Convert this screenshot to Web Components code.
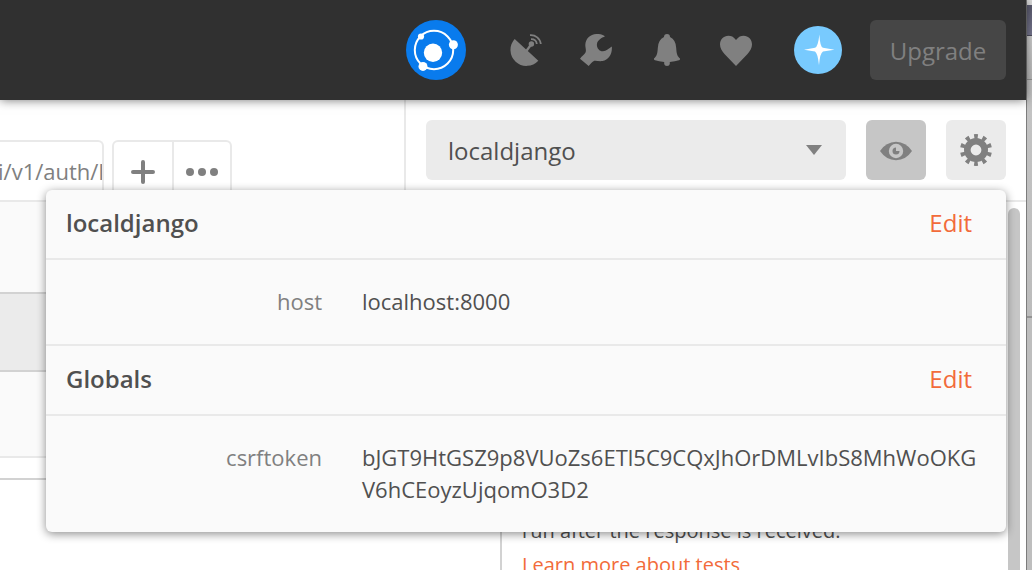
<!DOCTYPE html>
<html lang="en">
<head>
<meta charset="utf-8">
<title>API client</title>
<style>
  html, body { height: 100%; margin: 0; }
  body {
    font-family: "Open Sans", "Noto Sans", sans-serif;
    font-size: 22px; line-height: 32px; color: #505050; background: #fff;
    overflow: hidden;
    --line: #e9e9e9; --line-strong: #d2d2d2; --muted: #808080; --accent: #f26b3a; --panel: #fafafa;
  }
</style>
</head>
<body>
<app-shell>
  <app-header slot="header"></app-header>
  <request-tabs slot="tabs" label="i/v1/auth/l"></request-tabs>
  <env-bar slot="env"></env-bar>
  <request-builder slot="main"></request-builder>
  <env-popover slot="popover">
    <env-section heading="localdjango" name="host">localhost:8000</env-section>
    <env-section heading="Globals" name="csrftoken">bJGT9HtGSZ9p8VUoZs6ETl5C9CQxJhOrDMLvIbS8MhWoOKGV6hCEoyzUjqomO3D2</env-section>
  </env-popover>
</app-shell>

<script>
const define = (tag, html, setup) => {
  const template = document.createElement('template');
  template.innerHTML = html;
  customElements.define(tag, class extends HTMLElement {
    connectedCallback() {
      if (this.shadowRoot) return;
      this.attachShadow({ mode: 'open' }).append(template.content.cloneNode(true));
      if (setup) setup(this, this.shadowRoot);
    }
  });
};

const reset = `*{box-sizing:border-box} button,select{font:inherit;color:inherit;border:0;margin:0;padding:0;background:none;cursor:pointer} svg{display:block}`;

define('app-shell', `
<style>${reset}
  :host { display: flex; height: 100vh; overflow: hidden; }
  .app { flex: 1; min-width: 0; display: flex; flex-direction: column; position: relative; }
  .toolbar { display: flex; border-bottom: 2px solid var(--line); height: 102px; flex: none; }
  .tabs { flex: 0 0 404px; min-width: 0; padding-top: 40px; }
  .env { flex: 1; min-width: 0; border-left: 2px solid var(--line); padding: 20px; }
  main { flex: 1; min-height: 0; display: flex; }
  slot[name=main]::slotted(*) { flex: 1; min-width: 0; }
  .scroll { flex: 0 0 20px; padding: 6px 6px 0 2px; display: flex; }
  .thumb { flex: 1; background: #c6c6c6; border-radius: 6px 6px 0 0; }
</style>
<div class="app">
  <slot name="header"></slot>
  <div class="toolbar">
    <div class="tabs"><slot name="tabs"></slot></div>
    <div class="env"><slot name="env"></slot></div>
  </div>
  <main><slot name="main"></slot><div class="scroll"><div class="thumb"></div></div></main>
  <slot name="popover"></slot>
</div>
<desktop-edge></desktop-edge>`);

define('desktop-edge', `
<style>
  :host { flex: 0 0 6px; display: flex; flex-direction: column; border-left: 1px solid #7c7c7c; box-sizing: border-box; background: #bebebe; }
  .menu { height: 5px; background: #dcdcdc; }
  .window { height: 31px; background: linear-gradient(#5c5c70, #77778f); border-bottom: 1px solid #4c4c5c; box-sizing: border-box; }
  .title { height: 44px; background: linear-gradient(#cecece, #bababa); border-bottom: 1px solid #939393; box-sizing: border-box; }
  .pane { height: 238px; background: linear-gradient(#c4c4c4, #bcbcbc); border-bottom: 2px solid #939393; box-sizing: border-box; }
</style>
<div class="menu"></div><div class="window"></div><div class="title"></div><div class="pane"></div>`);

define('app-header', `
<style>${reset}
  :host { display: flex; align-items: center; justify-content: flex-end; height: 100px; flex: none; box-sizing: border-box; padding-right: 20px; background: #303030; color: var(--muted); box-shadow: 0 0 10px rgba(0,0,0,.55); position: relative; }
  nav { display: flex; gap: 38px; margin: 0 42px 0 44px; }
  .upgrade { width: 136px; height: 60px; padding-top: 2px; margin-left: 28px; border-radius: 6px; background: #464646; font-size: 24px; }
</style>
<button aria-label="Sync"><svg width="60" height="60" viewBox="0 0 60 60"><circle cx="30" cy="30" r="30" fill="#097bed"/><circle cx="28" cy="30" r="19.2" fill="none" stroke="#fff" stroke-width="2"/><g fill="#fff"><circle cx="27" cy="32.7" r="9.2"/><circle cx="15" cy="16.5" r="3.1"/><circle cx="47.4" cy="24.7" r="4.5"/><circle cx="17" cy="46.4" r="4.5"/></g></svg></button>
<nav>
  <button aria-label="Capture"><svg width="32" height="32" viewBox="0 0 32 32" fill="none" stroke="currentColor"><path fill="currentColor" stroke="none" d="M4.7 5 15.8 15.2 17.8 17.1 28.3 26.7A16 16 0 0 1 4.7 5Z"/><path stroke-width="2.2" d="M16 17.5 21.5 10"/><circle cx="21.4" cy="10" r="2.7" fill="currentColor" stroke="none"/><path stroke-width="1.8" d="M20 1.1A10 10 0 0 1 30.8 10M21 5.1Q26.3 5 26.8 10"/></svg></button>
  <button aria-label="Settings"><svg width="32" height="32" viewBox="0 0 32 32" fill="currentColor"><path d="M25 2.3C22 .2 19 0 16.5 0 10 .2 5.5 4.8 5.3 11 5.3 13.5 6.5 16.5 5.5 18.5 4.5 20.5 1.5 22.5 0 24.7L8.7 32C10.5 30.5 12 27.5 14.3 26.8 16.5 26.4 19 27.5 22.5 27 28.5 26 32.5 20 31.8 12.5 29 14.3 26 17.5 22.7 17.3 19 17 16.3 13.5 17 9.7 17.7 6 21.5 4 25 2.3Z"/></svg></button>
  <button aria-label="Notifications"><svg width="32" height="32" viewBox="0 0 32 32" fill="currentColor"><path d="M14 3A3 3 0 0 1 20 3Q26 6 26.2 14C26.5 20 27.5 22.5 30 24.5Q30.3 26 29 26.3Q25 27.6 19.8 28V30Q19.5 32 17 32T14.2 30V28Q9 27.6 5 26.3 3.7 26 4 24.5C6.5 22.5 7.5 20 7.8 14Q8 6 14 3Z"/></svg></button>
  <button aria-label="Favourites"><svg width="32" height="32" viewBox="0 0 32 32" fill="currentColor"><path d="M16 6C18.5 2.5 21 1.7 23.5 1.7 28.5 1.7 32 5.5 32 10.5 32 14 30 17 27.5 20L16 32 4.5 20C2 17 0 14 0 10.5 0 5.5 3.5 1.7 8.5 1.7 11 1.7 13.5 2.5 16 6Z"/></svg></button>
</nav>
<button aria-label="Account"><svg width="48" height="48" viewBox="0 0 48 48"><circle cx="24" cy="24" r="24" fill="#78cafe"/><path fill="#fff" d="M25.4 8.5Q26 21 29 21.8L40.5 23.7 29 25.6Q26 27 25 39.3 23.6 27 21 25.6L10 23.7 21 21.8Q24 21 25.4 8.5Z"/></svg></button>
<button class="upgrade">Upgrade</button>`);

define('request-tabs', `
<style>${reset}
  :host { display: flex; gap: 8px; color: var(--muted); }
  .tab { width: 104px; height: 60px; border: solid var(--line); border-width: 2px 2px 0 0; border-radius: 0 6px 0 0; overflow: hidden; display: flex; align-items: center; justify-content: center; white-space: nowrap; }
  .group { display: flex; border: 2px solid var(--line); border-bottom: 0; border-radius: 6px 6px 0 0; height: 62px; }
  .group button { width: 58px; display: grid; place-items: center; }
  .group button + button { border-left: 2px solid var(--line); }
</style>
<button class="tab"></button>
<div class="group">
  <button aria-label="New tab"><svg width="24" height="24" viewBox="0 0 24 24" stroke="currentColor" stroke-width="4" stroke-linecap="round"><path d="M12 2V22M2 12H22"/></svg></button>
  <button aria-label="Tab menu"><svg width="32" height="8" viewBox="0 0 32 8" fill="currentColor"><circle cx="4" cy="4" r="4"/><circle cx="16" cy="4" r="4"/><circle cx="28" cy="4" r="4"/></svg></button>
</div>`, (host, root) => { root.querySelector('.tab').textContent = host.getAttribute('label'); });

define('env-bar', `
<style>${reset}
  :host { display: flex; gap: 20px; color: var(--muted); }
  .pick { flex: 1; min-width: 0; display: grid; align-items: center; }
  .pick > * { grid-area: 1 / 1; }
  select { appearance: none; width: 100%; height: 60px; padding: 2px 22px 0; border-radius: 6px; background: #ebebeb; color: #505050; font-size: 24px; }
  .pick svg { justify-self: end; margin-right: 24px; pointer-events: none; }
  button { width: 60px; height: 60px; border-radius: 6px; background: #ebebeb; }
  button.on { background: #c6c6c6; }
</style>
<div class="pick">
  <select aria-label="Environment"><option>localdjango</option></select>
  <svg width="16" height="10" viewBox="0 0 16 10" fill="currentColor"><path d="M0 0H16L8 10Z"/></svg>
</div>
<button class="on" aria-label="Environment quick look" aria-pressed="true"><svg width="60" height="60" viewBox="0 0 60 60"><path fill="currentColor" d="M14 31Q20 22 30 21.8 40 22 46 31 40 40 30 40.2 20 40 14 31Z"/><circle cx="30" cy="31" r="7.2" fill="#c6c6c6"/><circle cx="30" cy="31" r="3.5" fill="currentColor"/><path fill="#c6c6c6" d="M30 31V27L34 27V31Z"/></svg></button>
<button aria-label="Manage environments"><svg width="60" height="60" viewBox="0 0 60 60" fill="none" stroke="currentColor"><circle cx="30" cy="30" r="8.7" stroke-width="6.6"/><circle cx="30" cy="30" r="13.5" stroke-width="5" pathLength="100" stroke-dasharray="4.4 5.6" stroke-dashoffset="2.2" transform="rotate(-90 30 30)"/></svg></button>`);

define('request-builder', `
<style>${reset}
  :host { display: flex; flex-direction: column; }
  .band { flex: none; border-bottom: 2px solid var(--line); background: var(--panel); }
  .url { height: 92px; border-color: var(--line-strong); }
  .active { height: 78px; background: #ebebeb; border-color: var(--line-strong); }
  .params { height: 86px; }
  .gap { height: 22px; background: #fff; border-color: var(--line-strong); }
  .split { flex: 1; min-height: 0; display: flex; justify-content: flex-end; }
  aside { width: 506px; border-left: 2px solid var(--line-strong); padding: 34px 20px 0; font-size: 20px; line-height: 34px; }
  p { margin: 0; }
  a { color: var(--accent); text-decoration: none; }
</style>
<div class="band url"></div><div class="band active"></div><div class="band params"></div><div class="band gap"></div>
<div class="split"><aside><p>run after the response is received.</p><p><a href="#tests">Learn more about tests</a></p></aside></div>`);

define('env-popover', `
<style>
  :host { position: absolute; top: 190px; left: 46px; right: 20px; border-radius: 6px; background: var(--panel); box-shadow: 0 2px 10px rgba(0,0,0,.45); overflow: hidden; }
</style>
<slot></slot>`);

define('env-section', `
<style>${reset}
  :host { display: block; }
  :host(:not(:first-child)) { border-top: 2px solid var(--line); }
  header { display: flex; align-items: center; justify-content: space-between; height: 70px; padding: 0 34px 2px 20px; border-bottom: 2px solid var(--line); font-size: 24px; }
  h2 { margin: 0; font-size: 24px; font-weight: 600; }
  button { color: var(--accent); }
  dl { display: grid; grid-template-columns: 276px 1fr; column-gap: 40px; margin: 0; padding: 25px 20px 27px 0; }
  dt { text-align: right; color: var(--muted); }
  dd { margin: 0; min-width: 0; overflow-wrap: anywhere; }
</style>
<header><h2></h2><button>Edit</button></header>
<dl><dt></dt><dd><slot></slot></dd></dl>`, (host, root) => {
  root.querySelector('h2').textContent = host.getAttribute('heading');
  root.querySelector('dt').textContent = host.getAttribute('name');
});
</script>
</body>
</html>
